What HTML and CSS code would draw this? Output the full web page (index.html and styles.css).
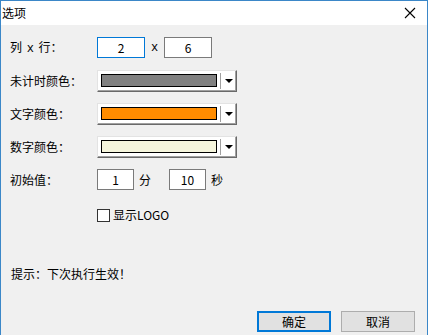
FILE: index.html
```html
<!DOCTYPE html>
<html lang="zh-CN">
<head>
  <meta charset="UTF-8" />
  <title>选项</title>
  <link rel="stylesheet" href="styles.css">
</head>
<body>
  <div class="window">
    <div class="titlebar">
      <span class="title">选项</span>
      <svg class="close" width="12" height="12" viewBox="0 0 12 12">
        <path d="M1 1 L11 11 M11 1 L1 11" stroke="#000" stroke-width="1.1" fill="none" />
      </svg>
    </div>

    <div class="content">
      <div class="row">
        <span class="label">列 <span class="mono">x</span> 行：</span>
        <div class="num focus">2</div>
        <span class="sep mono">x</span>
        <div class="num">6</div>
      </div>

      <div class="row">
        <span class="label">未计时颜色：</span>
        <div class="combo">
          <div class="swatch gray"></div>
          <div class="arrow"><span></span></div>
        </div>
      </div>

      <div class="row">
        <span class="label">文字颜色：</span>
        <div class="combo">
          <div class="swatch orange"></div>
          <div class="arrow"><span></span></div>
        </div>
      </div>

      <div class="row">
        <span class="label">数字颜色：</span>
        <div class="combo">
          <div class="swatch beige"></div>
          <div class="arrow"><span></span></div>
        </div>
      </div>

      <div class="row">
        <span class="label">初始值：</span>
        <div class="num short">1</div>
        <span class="unit">分</span>
        <div class="num short">10</div>
        <span class="unit">秒</span>
      </div>

      <div class="check-row">
        <span class="checkbox"></span>
        <span>显示LOGO</span>
      </div>

      <div class="hint">提示：下次执行生效！</div>

      <div class="buttons">
        <button class="btn default">确定</button>
        <button class="btn">取消</button>
      </div>
    </div>
  </div>
</body>
</html>
```

FILE: styles.css
```css
html, body {
  margin: 0;
  padding: 0;
}

body {
  width: 428px;
  height: 335px;
  overflow: hidden;
  font-family: "Noto Sans CJK SC", "DejaVu Sans", sans-serif;
  font-size: 12px;
  line-height: 16px;
  color: #000;
  background: #f0f0f0;
}

.window {
  box-sizing: border-box;
  width: 428px;
  height: 335px;
  border: 1px solid #3b87c8;
  border-bottom: none;
  background: #f0f0f0;
}

.titlebar {
  height: 24px;
  background: #fff;
  display: flex;
  align-items: center;
  justify-content: space-between;
  padding: 0 11px 0 1px;
}

.title {
  line-height: 24px;
}

.close {
  display: block;
}

.content {
  padding: 12px 0 0 9px;
  display: flex;
  flex-direction: column;
  gap: 12px;
}

.row {
  display: flex;
  align-items: center;
  height: 21px;
}

.label {
  width: 87px;
  white-space: pre;
}

.mono {
  font-family: "Liberation Mono", monospace;
  margin: 0 2px;
}

.num {
  box-sizing: border-box;
  width: 48px;
  height: 21px;
  border: 1px solid #7a7a7a;
  background: #fff;
  text-align: center;
  line-height: 19px;
}

.num.focus {
  border-color: #0078d7;
}

.num.short {
  width: 37px;
}

.sep {
  width: 15px;
  text-align: center;
}

.unit {
  width: 35px;
  padding-left: 5px;
  box-sizing: border-box;
}

.combo {
  box-sizing: border-box;
  width: 140px;
  height: 22px;
  display: flex;
  align-items: center;
  background: #fff;
  border-top: 1px solid #e3e3e3;
  border-left: 1px solid #e3e3e3;
  border-right: 1px solid #696969;
  border-bottom: 1px solid #696969;
  box-shadow: inset -1px -1px 0 #a0a0a0;
  padding-left: 3px;
}

.swatch {
  box-sizing: border-box;
  width: 116px;
  height: 13px;
  border: 1px solid #000;
}

.swatch.gray { background: #808080; }
.swatch.orange { background: #ff8c00; }
.swatch.beige { background: #f5f5dc; }

.arrow {
  flex: 1;
  height: 16px;
  margin-left: 3px;
  border-left: 1px solid #a0a0a0;
  display: flex;
  align-items: center;
  justify-content: center;
}

.arrow span {
  width: 0;
  height: 0;
  border-left: 4px solid transparent;
  border-right: 4px solid transparent;
  border-top: 4px solid #000;
}

.check-row {
  display: flex;
  align-items: center;
  gap: 3px;
  margin: 5px 0 0 87px;
}

.checkbox {
  box-sizing: border-box;
  width: 13px;
  height: 13px;
  border: 1px solid #333;
  background: #fff;
}

.hint {
  margin-top: 31px;
  padding-left: 1px;
}

.buttons {
  display: flex;
  gap: 10px;
  margin: 17px 0 0 247px;
}

.btn {
  box-sizing: border-box;
  width: 74px;
  height: 21px;
  padding: 0;
  font-family: inherit;
  font-size: 12px;
  background: #e1e1e1;
  border: 1px solid #adadad;
}

.btn.default {
  border: 2px solid #0078d7;
}
```
